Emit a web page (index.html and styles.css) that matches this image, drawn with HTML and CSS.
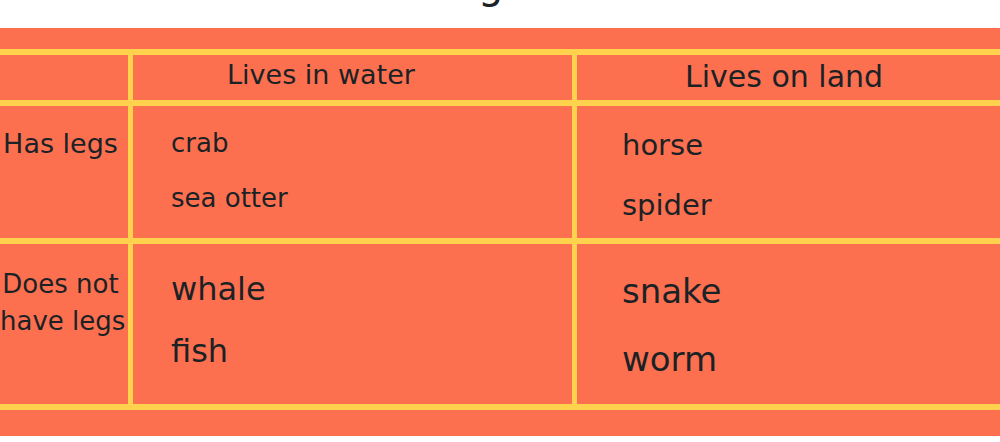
FILE: index.html
```html
<!DOCTYPE html>
<html lang="en">
<head>
<meta charset="utf-8">
<title>Sorting animals</title>
<link rel="stylesheet" href="styles.css">
</head>
<body>
<h1 class="title">Sorting animals</h1>
<section class="board">
  <div class="grid">
    <div class="cell corner"></div>
    <div class="cell head head-water">Lives in water</div>
    <div class="cell head head-land">Lives on land</div>

    <div class="cell label label-legs">Has legs</div>
    <div class="cell list-cell water r2">
      <ul class="items s26"><li>crab</li><li>sea otter</li></ul>
    </div>
    <div class="cell list-cell land r2b">
      <ul class="items s29"><li>horse</li><li>spider</li></ul>
    </div>

    <div class="cell label label-nolegs">Does not<br>have legs</div>
    <div class="cell list-cell water r3">
      <ul class="items s32"><li>whale</li><li>fish</li></ul>
    </div>
    <div class="cell list-cell land r3b">
      <ul class="items s34"><li>snake</li><li>worm</li></ul>
    </div>
  </div>
</section>
</body>
</html>
```
FILE: styles.css
```css
html, body {
  margin: 0;
  padding: 0;
  background: #ffffff;
}
body {
  font-family: "DejaVu Sans", "Liberation Sans", sans-serif;
  color: #1b2225;
  overflow: hidden;
}
.title {
  font-size: 40px;
  line-height: 48px;
  font-weight: normal;
  text-align: center;
  margin: -40px 0 20px;
  padding-left: 32px;
}
.board {
  background: #fc7050;
  padding: 21px 0 26px;
}
.grid {
  display: grid;
  grid-template-columns: 128px 439px 1fr;
  grid-template-rows: 45px 132px 160px;
  gap: 6px 5px;
  background: #ffd24d;
  padding: 6px 0;
}
.cell {
  background: #fc7050;
  box-sizing: border-box;
  min-width: 0;
}
.head {
  padding-top: 4px;
  white-space: nowrap;
}
.head-water {
  font-size: 27px;
  padding-left: 94px;
}
.head-land {
  font-size: 30px;
  padding-left: 108px;
}
.label {
  text-align: center;
  white-space: nowrap;
  padding-right: 7px;
}
.label-legs {
  font-size: 27px;
  padding-top: 22px;
}
.label-nolegs {
  font-size: 26px;
  line-height: 37px;
  padding-top: 22px;
}
.water { padding-left: 38px; }
.land { padding-left: 45px; }
.r2 { padding-top: 10px; }
.r2b { padding-top: 9px; }
.r3 { padding-top: 14px; }
.r3b { padding-top: 13px; }
.items {
  list-style: none;
  margin: 0;
  padding: 0;
}
.s26 { font-size: 26px; line-height: 55px; }
.s29 { font-size: 29px; line-height: 60px; }
.s32 { font-size: 32px; line-height: 62px; }
.s34 { font-size: 34px; line-height: 68px; }
```
